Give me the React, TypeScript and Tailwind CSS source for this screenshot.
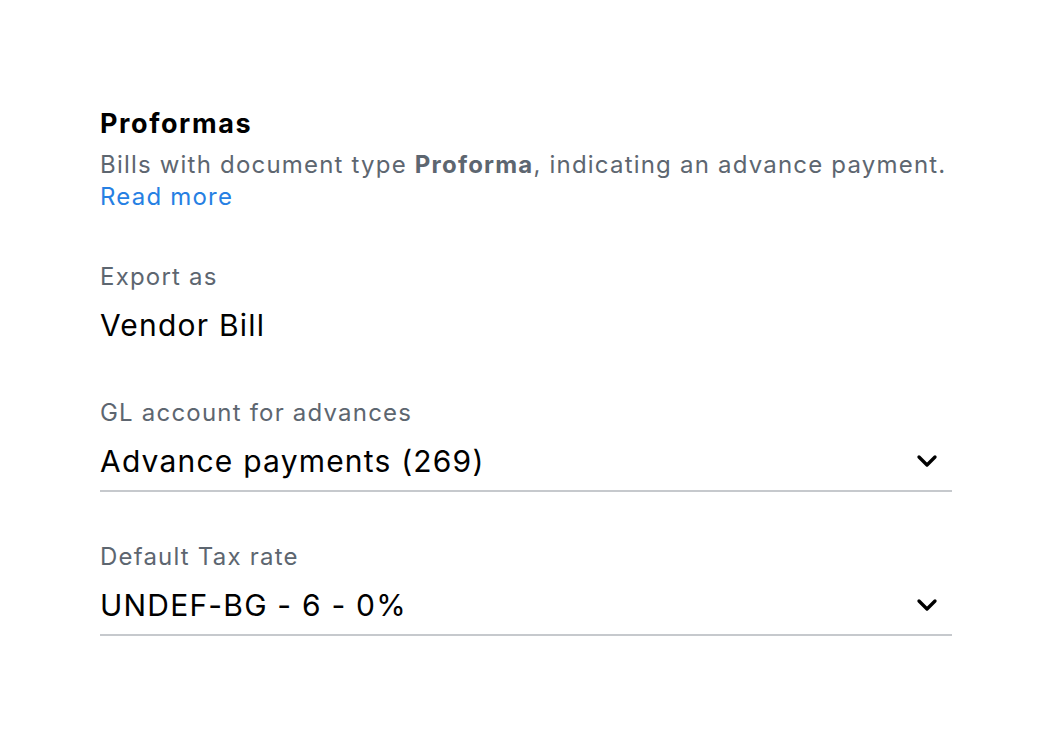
import { ChevronDown } from "lucide-react";

type SelectFieldProps = {
  label: string;
  value: string;
  className?: string;
};

function SelectField({ label, value, className = "" }: SelectFieldProps) {
  return (
    <div className={`flex flex-col ${className}`}>
      <span className="text-[24px] leading-[32px] tracking-[1.2px] text-[#5d6670]">{label}</span>
      <button
        type="button"
        className="mt-[14px] flex items-center justify-between border-b-2 border-[#c6c9cd] pb-[11px] text-left"
      >
        <span className="text-[30px] leading-[36px] tracking-[1.2px] text-black">{value}</span>
        <ChevronDown className="mr-[9px] h-8 w-8 text-black" strokeWidth={2.5} />
      </button>
    </div>
  );
}

export default function App() {
  return (
    <div className="min-h-screen bg-white font-[Inter,sans-serif]">
      <div className="ml-[100px] w-[852px] pt-[104px]">
        <h2 className="text-[27px] leading-[40px] font-bold tracking-[1.6px] text-black">Proformas</h2>
        <p className="mt-[5px] text-[24px] leading-[32px] tracking-[1.2px] text-[#5d6670]">
          Bills with document type <strong className="font-bold">Proforma</strong>, indicating an
          advance payment.
          <br />
          <a href="#" className="text-[#2680e3]">
            Read more
          </a>
        </p>

        <div className="mt-[48px] flex flex-col">
          <span className="text-[24px] leading-[32px] tracking-[1.2px] text-[#5d6670]">Export as</span>
          <span className="mt-[14px] text-[30px] leading-[36px] tracking-[1.2px] text-black">
            Vendor Bill
          </span>
        </div>

        <SelectField className="mt-[54px]" label="GL account for advances" value="Advance payments (269)" />
        <SelectField className="mt-[49px]" label="Default Tax rate" value="UNDEF-BG - 6 - 0%" />
      </div>
    </div>
  );
}
